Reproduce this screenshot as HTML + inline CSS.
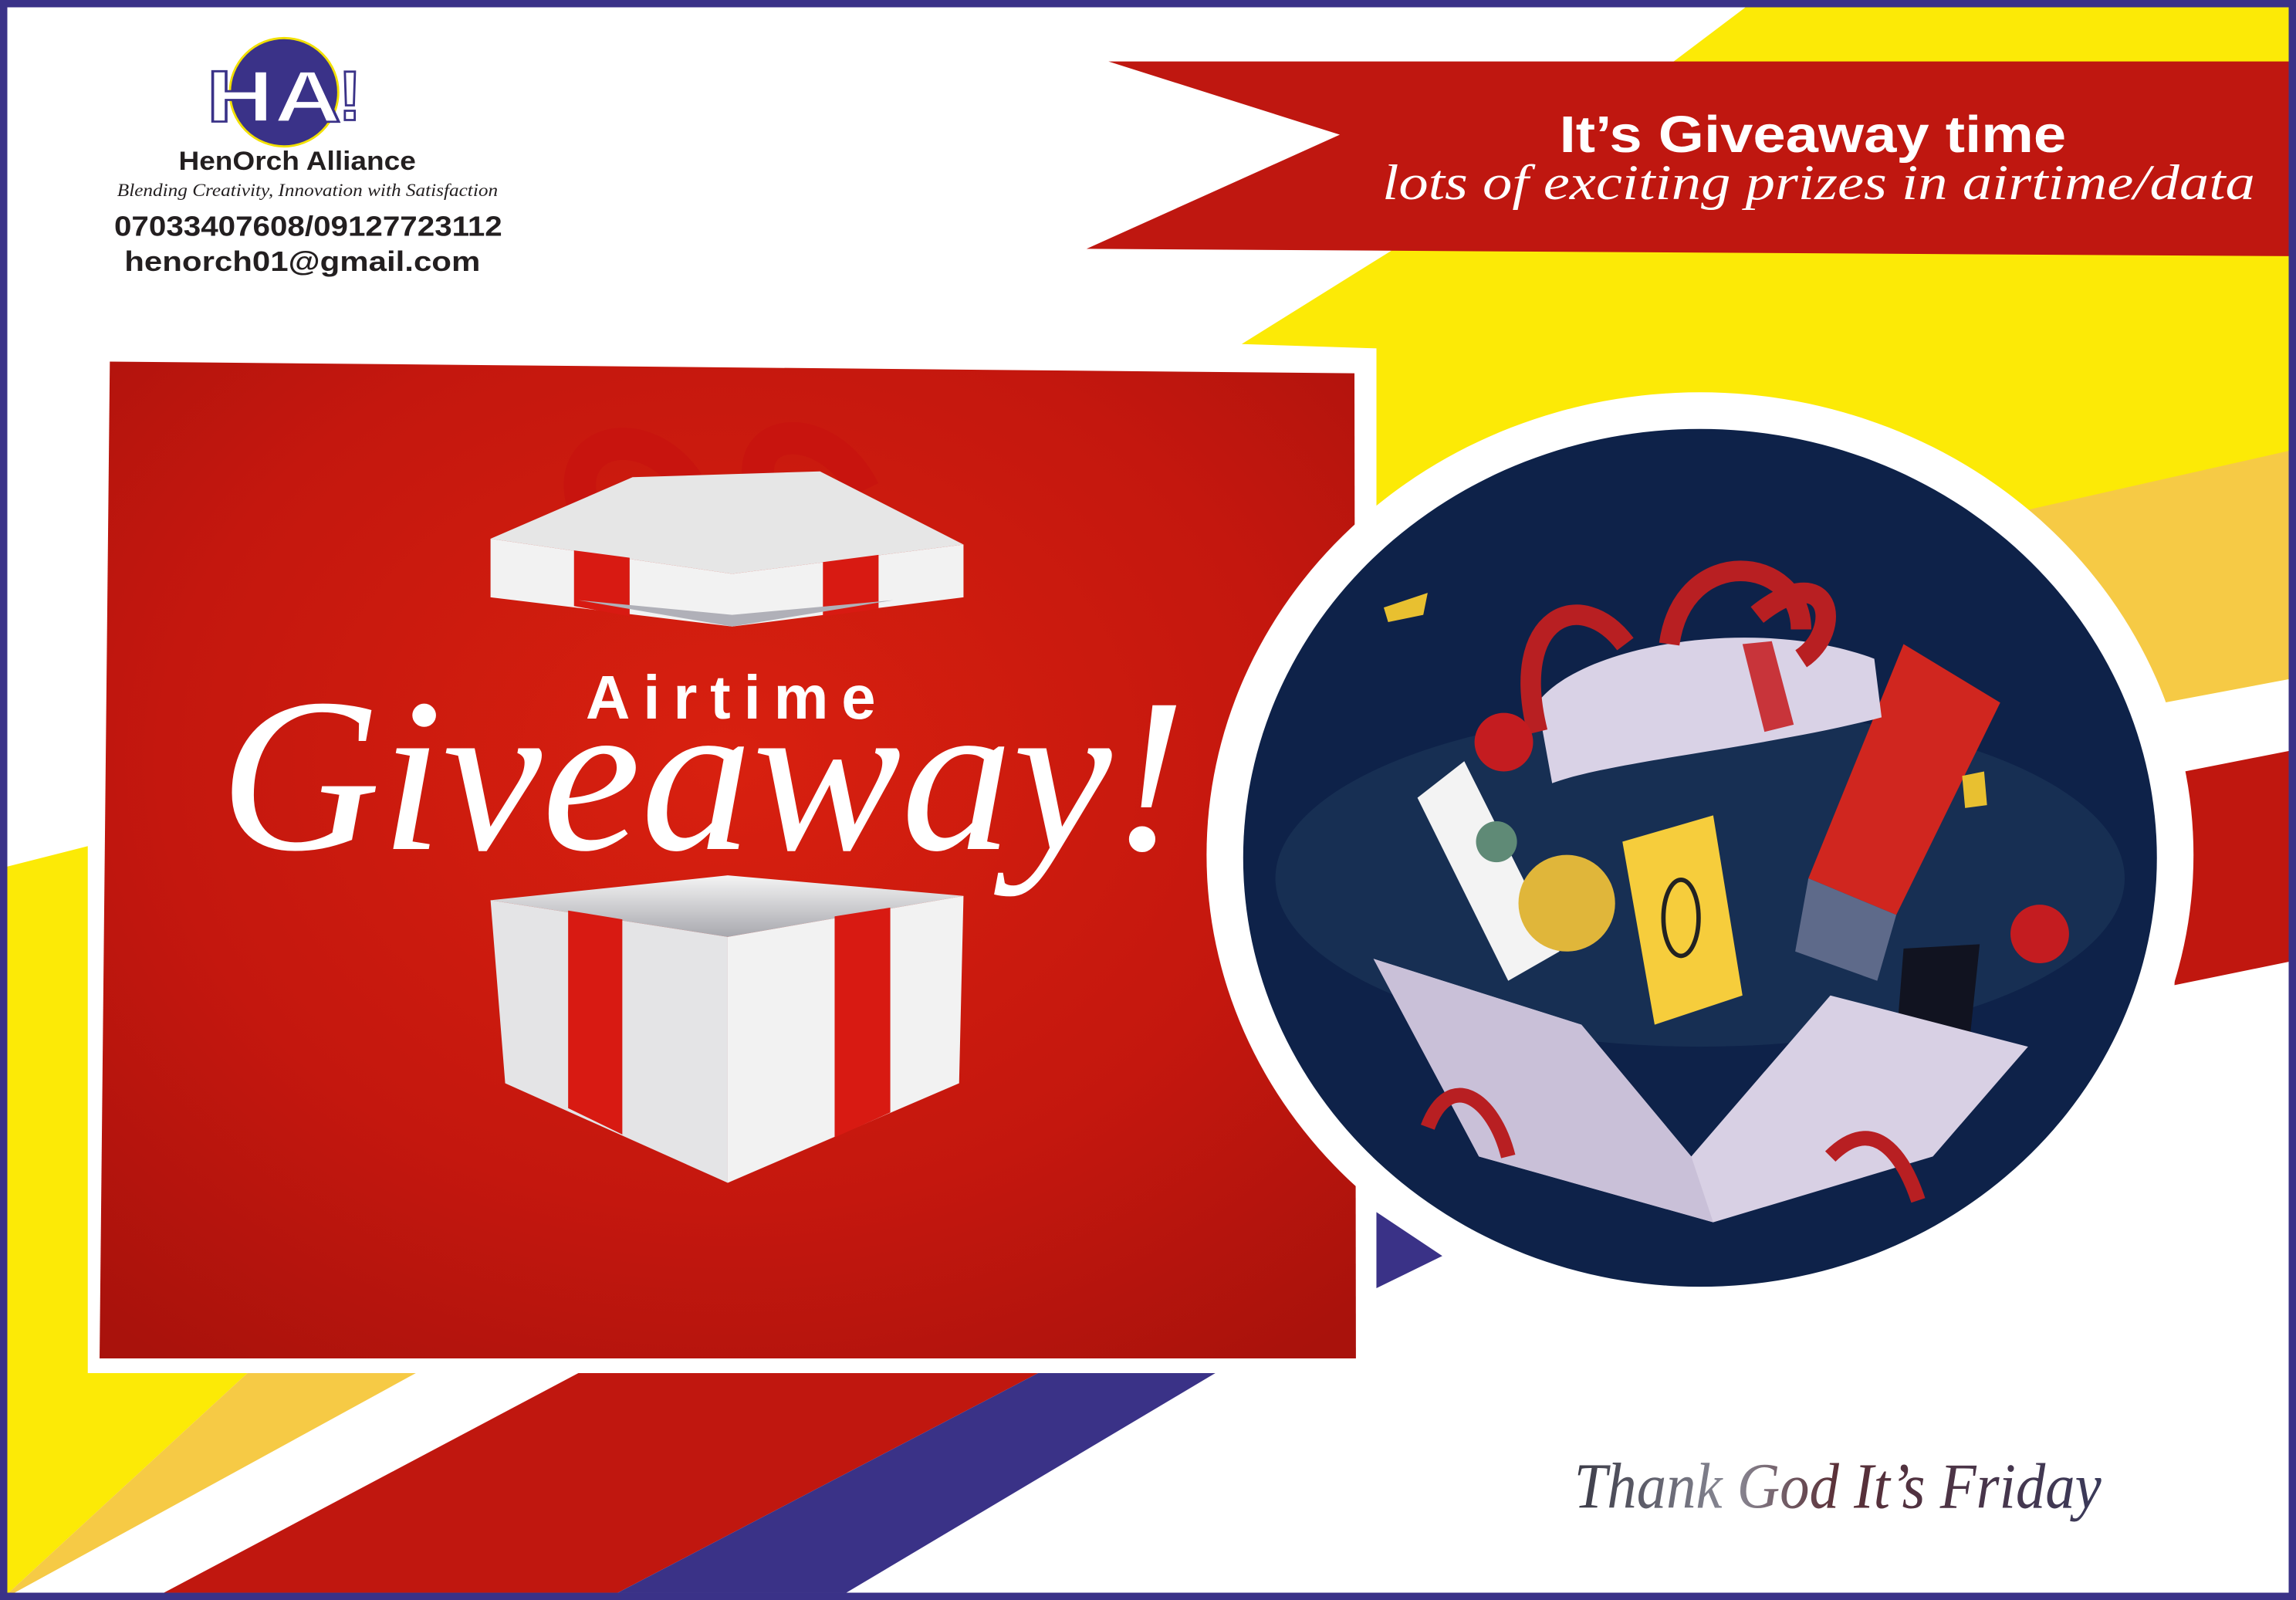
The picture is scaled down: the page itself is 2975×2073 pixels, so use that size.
<!DOCTYPE html>
<html><head><meta charset="utf-8"><style>
html,body{margin:0;padding:0;background:#fff;}
svg{display:block;width:2975px;height:2073px;}
</style></head><body>
<svg viewBox="0 0 1568 1093" preserveAspectRatio="none" xmlns="http://www.w3.org/2000/svg">
<defs>
<radialGradient id="rg" cx="0.5" cy="0.4" r="0.75">
<stop offset="0" stop-color="#d8200f"/><stop offset="0.6" stop-color="#c4170e"/><stop offset="1" stop-color="#a9120c"/>
</radialGradient>
<linearGradient id="inner" x1="0" y1="0" x2="0" y2="1"><stop offset="0" stop-color="#f4f4f4"/><stop offset="1" stop-color="#a8a8ae"/></linearGradient>
<linearGradient id="tg" x1="0" y1="0" x2="1" y2="0"><stop offset="0" stop-color="#3a3a46"/><stop offset="0.3" stop-color="#8a8a96"/><stop offset="0.5" stop-color="#5a2f36"/><stop offset="1" stop-color="#3a3a5a"/></linearGradient>
</defs>
<rect width="1568" height="1093" fill="#fff"/>
<polygon points="1192,5 1563,5 1563,470 1300,520 940,520 940,238 848,235 949,172 1143,42" fill="#fcea06"/>
<polygon points="1386,348 1563,308 1563,464 1478,480 1300,520" fill="#f6ca45"/>
<polygon points="1478,480 1563,464 1563,513 1492,527" fill="#fff"/>
<polygon points="1492,527 1563,513 1563,657 1485,673" fill="#c0170f"/>
<polygon points="757,42 1563,42 1563,175 742,170 915,92" fill="#bf1710"/>
<text x="1238" y="104" font-family="Liberation Sans, sans-serif" font-weight="bold" font-size="35" fill="#fff" text-anchor="middle" textLength="346" lengthAdjust="spacingAndGlyphs">It’s Giveaway time</text>
<text x="944" y="136" font-family="Liberation Serif, serif" font-style="italic" font-size="34" fill="#fff" textLength="596" lengthAdjust="spacingAndGlyphs">lots of exciting prizes in airtime/data</text>
<polygon points="5,592 60,578 60,938 169,938 6,1088 5,1088" fill="#fcea06"/>
<polygon points="169,938 284,938 10,1088 6,1088" fill="#f6ca45"/>
<polygon points="395,938 709,938 422,1088 112,1088" fill="#c0170f"/>
<polygon points="709,938 830,938 578,1088 422,1088" fill="#3a3287"/>
<rect x="60" y="238" width="880" height="700" fill="#fff"/>
<polygon points="75,247 925,255 926,928 68,928" fill="url(#rg)"/>
<polygon points="940,828 985,858 940,880" fill="#3a3287"/>
<g>
<path d="M400,350 C380,300 440,285 470,330 M520,335 C505,290 565,285 590,335" stroke="#c8140e" stroke-width="22" fill="none"/>
<polygon points="335,368 432,326 560,322 658,372 500,392" fill="#e6e6e6"/>
<polygon points="335,368 500,392 658,372 658,408 500,428 335,408" fill="#f2f2f2"/>
<polygon points="392,376 430,381 430,421 392,414" fill="#d81a12"/>
<polygon points="562,384 600,379 600,416 562,421" fill="#d81a12"/>
<polygon points="395,410 500,428 610,410 500,420" fill="#b0b0b8"/>
</g>
<g>
<polygon points="335,615 497,598 658,612 497,640" fill="url(#inner)"/>
<polygon points="335,615 497,640 497,808 345,740" fill="#e4e4e6"/>
<polygon points="497,640 658,612 655,740 497,808" fill="#f2f2f2"/>
<polygon points="388,622 425,628 425,775 388,757" fill="#d81a12"/>
<polygon points="570,626 608,620 608,760 570,777" fill="#d81a12"/>
</g>
<text x="400" y="491" font-family="Liberation Sans, sans-serif" font-weight="bold" font-size="42" fill="#fff" textLength="198" lengthAdjust="spacing">Airtime</text>
<text x="150" y="580" font-family="Liberation Serif, serif" font-style="italic" font-size="150" fill="#fff" textLength="660" lengthAdjust="spacingAndGlyphs">Giveaway!</text>
<ellipse cx="1161" cy="584" rx="337" ry="316" fill="#fff"/>
<ellipse cx="1161" cy="586" rx="312" ry="293" fill="#0e2249"/>
<ellipse cx="1161" cy="600" rx="290" ry="115" fill="#1b3558" opacity="0.7"/>
<polygon points="968,545 1000,520 1065,650 1030,670" fill="#f3f3f3"/>
<circle cx="1022" cy="575" r="14" fill="#5f8a76"/>
<polygon points="1108,575 1170,557 1190,680 1130,700" fill="#f6cd3c"/>
<ellipse cx="1148" cy="627" rx="12" ry="26" fill="none" stroke="#222" stroke-width="3"/>
<polygon points="1235,600 1300,440 1366,480 1295,625" fill="#d0261f"/>
<polygon points="1235,600 1295,625 1282,670 1226,650" fill="#5e6a8a"/>
<circle cx="1070" cy="617" r="33" fill="#e0b63a"/>
<polygon points="1300,648 1352,645 1345,712 1295,712" fill="#111320"/>
<path d="M1050,480 C1080,440 1200,420 1280,450 L1285,490 C1210,510 1100,520 1060,535 Z" fill="#d9d2e6"/>
<path d="M1050,500 C1030,420 1080,400 1110,440 M1140,440 C1150,370 1230,380 1230,430 M1200,420 C1250,380 1260,430 1230,450" stroke="#b81f22" stroke-width="14" fill="none"/>
<polygon points="1190,440 1210,438 1225,495 1205,500" fill="#c8343a"/>
<circle cx="1027" cy="507" r="20" fill="#c41c20"/>
<circle cx="1393" cy="638" r="20" fill="#c41c20"/>
<polygon points="938,655 1080,700 1155,790 1250,680 1385,715 1320,790 1170,835 1010,790" fill="#d8d0e4"/>
<polygon points="938,655 1080,700 1155,790 1170,835 1010,790" fill="#c9c0d8"/>
<path d="M975,770 C990,730 1020,750 1030,790 M1250,790 C1280,760 1300,790 1310,820" stroke="#b81f22" stroke-width="10" fill="none"/>
<polygon points="945,415 975,405 972,420 948,425" fill="#e8c030"/>
<polygon points="1340,530 1355,527 1357,550 1342,552" fill="#e8c030"/>
<text x="1075" y="1030" font-family="Liberation Serif, serif" font-style="italic" font-size="44" fill="url(#tg)" textLength="360" lengthAdjust="spacingAndGlyphs">Thank God It’s Friday</text>
<circle cx="194" cy="63" r="37" fill="#3a3288" stroke="#f2e000" stroke-width="1.5"/>
<text x="141" y="83" font-family="Liberation Sans, sans-serif" font-weight="bold" font-size="50" fill="#fff" stroke="#3a3288" stroke-width="1.5" textLength="92" lengthAdjust="spacingAndGlyphs">HA</text>
<text x="231" y="82" font-family="Liberation Sans, sans-serif" font-weight="bold" font-size="48" fill="#fff" stroke="#3a3288" stroke-width="1.5">!</text>
<text x="203" y="116" font-family="Liberation Sans, sans-serif" font-weight="bold" font-size="18" fill="#231f20" text-anchor="middle" textLength="162" lengthAdjust="spacingAndGlyphs">HenOrch Alliance</text>
<text x="80" y="134" font-family="Liberation Serif, serif" font-style="italic" font-size="12" fill="#231f20" textLength="260" lengthAdjust="spacingAndGlyphs">Blending Creativity, Innovation with Satisfaction</text>
<text x="78" y="161" font-family="Liberation Sans, sans-serif" font-weight="bold" font-size="19" fill="#231f20" textLength="265" lengthAdjust="spacingAndGlyphs">07033407608/09127723112</text>
<text x="85" y="185" font-family="Liberation Sans, sans-serif" font-weight="bold" font-size="19" fill="#231f20" textLength="243" lengthAdjust="spacingAndGlyphs">henorch01@gmail.com</text>
<rect x="2.5" y="2.5" width="1563" height="1088" fill="none" stroke="#3a3288" stroke-width="5"/>
</svg>
</body></html>
